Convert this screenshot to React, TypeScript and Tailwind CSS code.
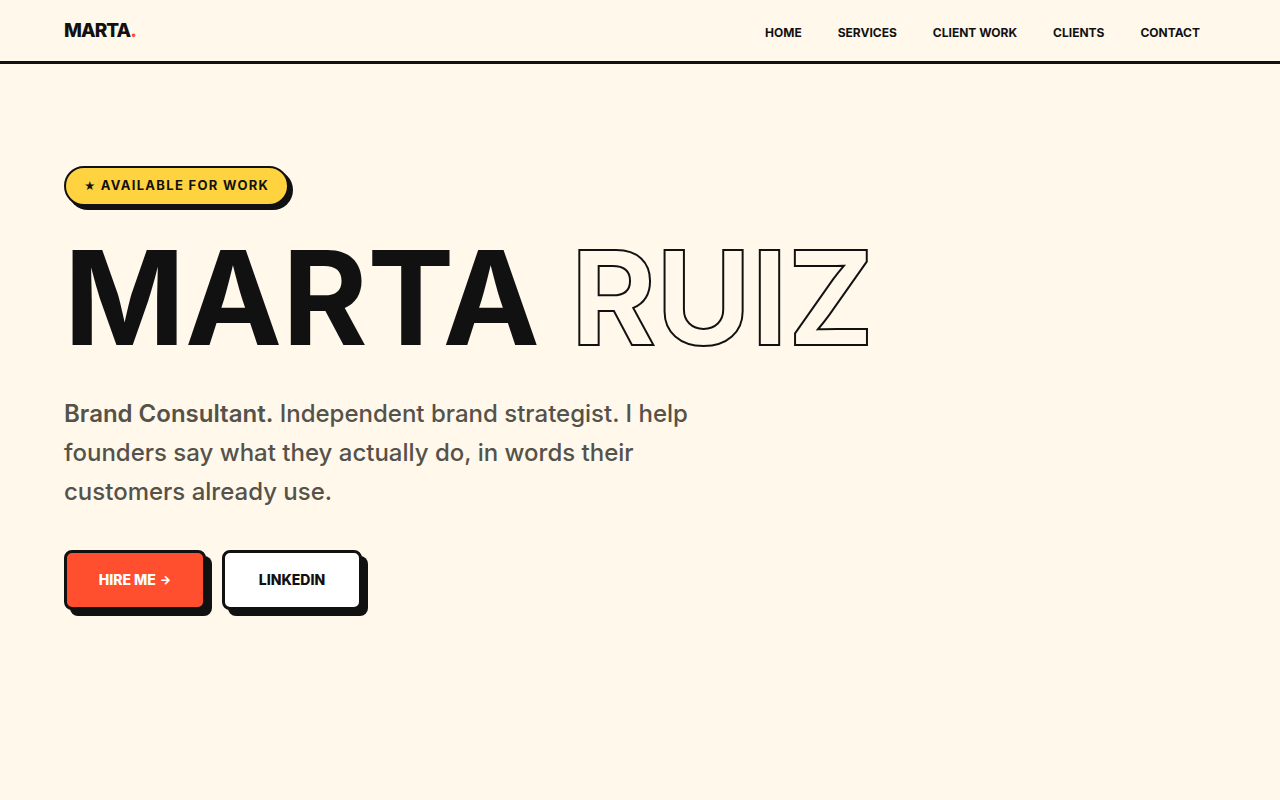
import React from 'react';

interface NavLink {
  label: string;
  href: string;
}

const NAV_LINKS: NavLink[] = [
  { label: 'Home',        href: '#home' },
  { label: 'Services',    href: '#services' },
  { label: 'Client Work', href: '#work' },
  { label: 'Clients',     href: '#clients' },
  { label: 'Contact',     href: '#contact' },
];

const Header = () => (
  <header className="flex items-center justify-between h-16 pl-16 pr-20 border-b-3 border-[#111111]">
    <a href="#home" className="text-[19px] leading-7 font-extrabold tracking-tighter">
      MARTA<span className="text-[#ff4f2e]">.</span>
    </a>
    <nav className="flex gap-9 pt-1">
      {NAV_LINKS.map(link => (
        <a key={link.href} href={link.href} className="text-xs font-bold uppercase">
          {link.label}
        </a>
      ))}
    </nav>
  </header>
);

const Hero = () => (
  <main id="home" className="flex flex-col items-start px-16 pt-[102px] pb-24">
    {/* Availability badge */}
    <p className="flex items-center gap-1 h-10 px-[18px] rounded-full border-2 border-[#111111] bg-[#ffd23f] text-[13px] font-bold tracking-widest uppercase shadow-[4px_4px_0_#111111]">
      <span className="text-[11px]">★</span>
      <span>Available for work</span>
    </p>

    <h1 className="mt-6 text-[130px] leading-[136px] font-bold uppercase">
      Marta{' '}
      <span className="text-transparent [-webkit-text-stroke:2px_#111111]">Ruiz</span>
    </h1>

    <p className="mt-7 max-w-[640px] text-2xl leading-[39px] font-medium text-[#55524a]">
      <strong className="font-semibold">Brand Consultant.</strong> Independent brand strategist. I help
      founders say what they actually do, in words their customers already use.
    </p>

    {/* Calls to action */}
    <div className="flex gap-4 mt-[39px]">
      <a
        href="#contact"
        className="flex items-center justify-center gap-1 w-[142px] h-[60px] rounded-lg border-3 border-[#111111] bg-[#ff4f2e] text-white text-sm font-extrabold uppercase shadow-[6px_6px_0_#111111]"
      >
        <span>Hire me</span>
        <span className="text-xs">→</span>
      </a>
      <a
        href="#linkedin"
        className="flex items-center justify-center w-[140px] h-[60px] rounded-lg border-3 border-[#111111] bg-white text-sm font-extrabold uppercase shadow-[6px_6px_0_#111111]"
      >
        LinkedIn
      </a>
    </div>
  </main>
);

export default function App() {
  return (
    <div className="min-h-screen bg-[#fff8eb] text-[#111111] font-['Inter',sans-serif]">
      <Header />
      <Hero />
    </div>
  );
}
